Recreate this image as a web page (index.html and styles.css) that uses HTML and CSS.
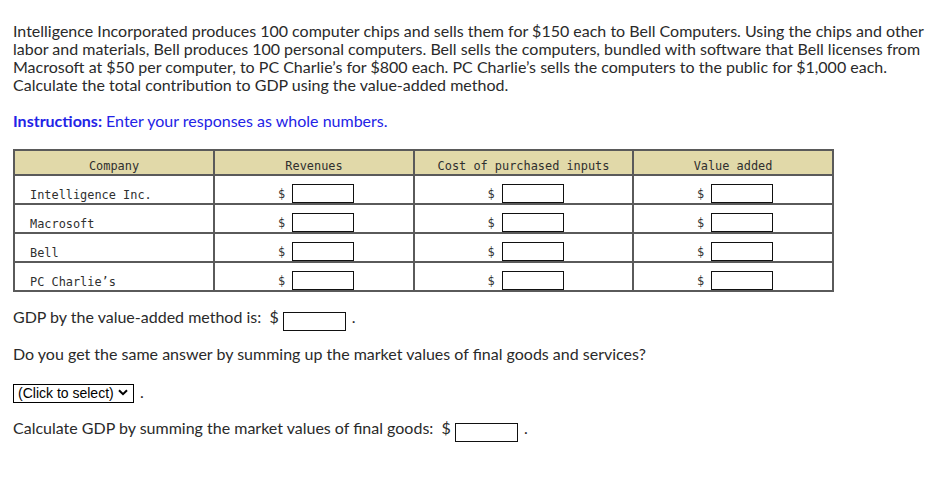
FILE: index.html
```html
<!DOCTYPE html>
<html lang="en">
<head>
<meta charset="utf-8">
<title>Value added</title>
<link rel="stylesheet" href="styles.css">
</head>
<body>
<div class="page">
  <p class="intro">Intelligence Incorporated produces 100 computer chips and sells them for $150 each to Bell Computers. Using the chips and other labor and materials, Bell produces 100 personal computers. Bell sells the computers, bundled with software that Bell licenses from Macrosoft at $50 per computer, to PC Charlie’s for $800 each. PC Charlie’s sells the computers to the public for $1,000 each. Calculate the total contribution to GDP using the value-added method.</p>
  <p class="instructions"><strong>Instructions:</strong> Enter your responses as whole numbers.</p>

  <table class="grid">
    <colgroup>
      <col class="c-company"><col class="c-rev"><col class="c-cost"><col class="c-val">
    </colgroup>
    <thead>
      <tr><th>Company</th><th>Revenues</th><th>Cost of purchased inputs</th><th>Value added</th></tr>
    </thead>
    <tbody>
      <tr><td><div class="name">Intelligence Inc.</div></td><td><div class="amt"><span>$</span><input type="text" class="box"></div></td><td><div class="amt"><span>$</span><input type="text" class="box"></div></td><td><div class="amt"><span>$</span><input type="text" class="box"></div></td></tr>
      <tr><td><div class="name">Macrosoft</div></td><td><div class="amt"><span>$</span><input type="text" class="box"></div></td><td><div class="amt"><span>$</span><input type="text" class="box"></div></td><td><div class="amt"><span>$</span><input type="text" class="box"></div></td></tr>
      <tr><td><div class="name">Bell</div></td><td><div class="amt"><span>$</span><input type="text" class="box"></div></td><td><div class="amt"><span>$</span><input type="text" class="box"></div></td><td><div class="amt"><span>$</span><input type="text" class="box"></div></td></tr>
      <tr><td><div class="name">PC Charlie’s</div></td><td><div class="amt"><span>$</span><input type="text" class="box"></div></td><td><div class="amt"><span>$</span><input type="text" class="box"></div></td><td><div class="amt"><span>$</span><input type="text" class="box"></div></td></tr>
    </tbody>
  </table>

  <p class="line gdp">GDP by the value-added method is:&nbsp; $<input type="text" class="box answer"> <span class="dot">.</span></p>
  <p class="line q">Do you get the same answer by summing up the market values of final goods and services?</p>
  <p class="line sel"><span class="select-wrap"><select class="pick"><option>(Click to select)</option><option>Yes</option><option>No</option></select><svg class="chev" width="10" height="7" viewBox="0 0 10 7"><path d="M1 1.2 L5 5.2 L9 1.2" fill="none" stroke="#000" stroke-width="2"/></svg></span> <span class="dot">.</span></p>
  <p class="line calc">Calculate GDP by summing the market values of final goods:&nbsp; $<input type="text" class="box answer"> <span class="dot">.</span></p>
</div>
</body>
</html>
```

FILE: styles.css
```css
html, body {
  margin: 0;
  padding: 0;
  background: #fff;
}
.page {
  padding: 22px 13px 50px 13px;
  font-family: "Lato", "Open Sans", sans-serif;
  font-size: 16px;
  line-height: 18px;
  color: #2a2a2a;
}
p {
  margin: 0;
}
.intro {
  width: 915px;
}
.instructions {
  margin-top: 18px;
  color: #2323e6;
}
.instructions strong {
  font-weight: 700;
}
.grid {
  margin-top: 19px;
  border-collapse: collapse;
  table-layout: fixed;
  width: 820px;
  font-family: "DejaVu Sans Mono", "Liberation Mono", monospace;
  font-size: 11.9px;
  line-height: 14px;
  color: #2f2f2f;
}
.c-company, .c-rev, .c-val { width: 200px; }
.c-cost { width: 219px; }
.grid th, .grid td {
  border: 2px solid #5a5a5a;
  padding: 0;
}
.grid th {
  background: #e1d9a9;
  font-weight: normal;
  height: 22px;
  vertical-align: bottom;
  padding-bottom: 1px;
}
.grid td {
  height: 27px;
}
.name {
  height: 27px;
  box-sizing: border-box;
  display: flex;
  align-items: flex-end;
  padding: 0 0 1px 15px;
}
.amt {
  height: 27px;
  display: flex;
  justify-content: center;
  align-items: flex-end;
  gap: 7px;
  padding-left: 4px;
}
.amt span {
  padding-bottom: 2px;
}
.box {
  box-sizing: border-box;
  width: 62px;
  height: 19px;
  border: 1px solid #111;
  border-radius: 0;
  padding: 0;
  margin: 0;
  vertical-align: bottom;
  background: #fff;
  font: inherit;
}
.line {
  height: 18px;
}
.gdp {
  margin-top: 16px;
}
.answer {
  width: 63px;
  margin-left: 4px;
  vertical-align: -5px;
}
.dot {
  margin-left: 2px;
}
.q {
  margin-top: 19px;
}
.sel {
  margin-top: 20px;
  height: 19px;
}
.select-wrap {
  position: relative;
  display: inline-block;
  vertical-align: top;
}
.pick {
  -webkit-appearance: none;
  appearance: none;
  box-sizing: border-box;
  width: 121px;
  height: 19px;
  border: 1px solid #000;
  border-radius: 0;
  background: #fff;
  font-family: "Liberation Sans", Arial, sans-serif;
  font-size: 14px;
  color: #000;
  padding: 0 0 0 4px;
  margin: 0;
  line-height: 17px;
}
.chev {
  position: absolute;
  right: 6px;
  top: 6px;
  pointer-events: none;
}
.calc {
  margin-top: 17px;
}
```
